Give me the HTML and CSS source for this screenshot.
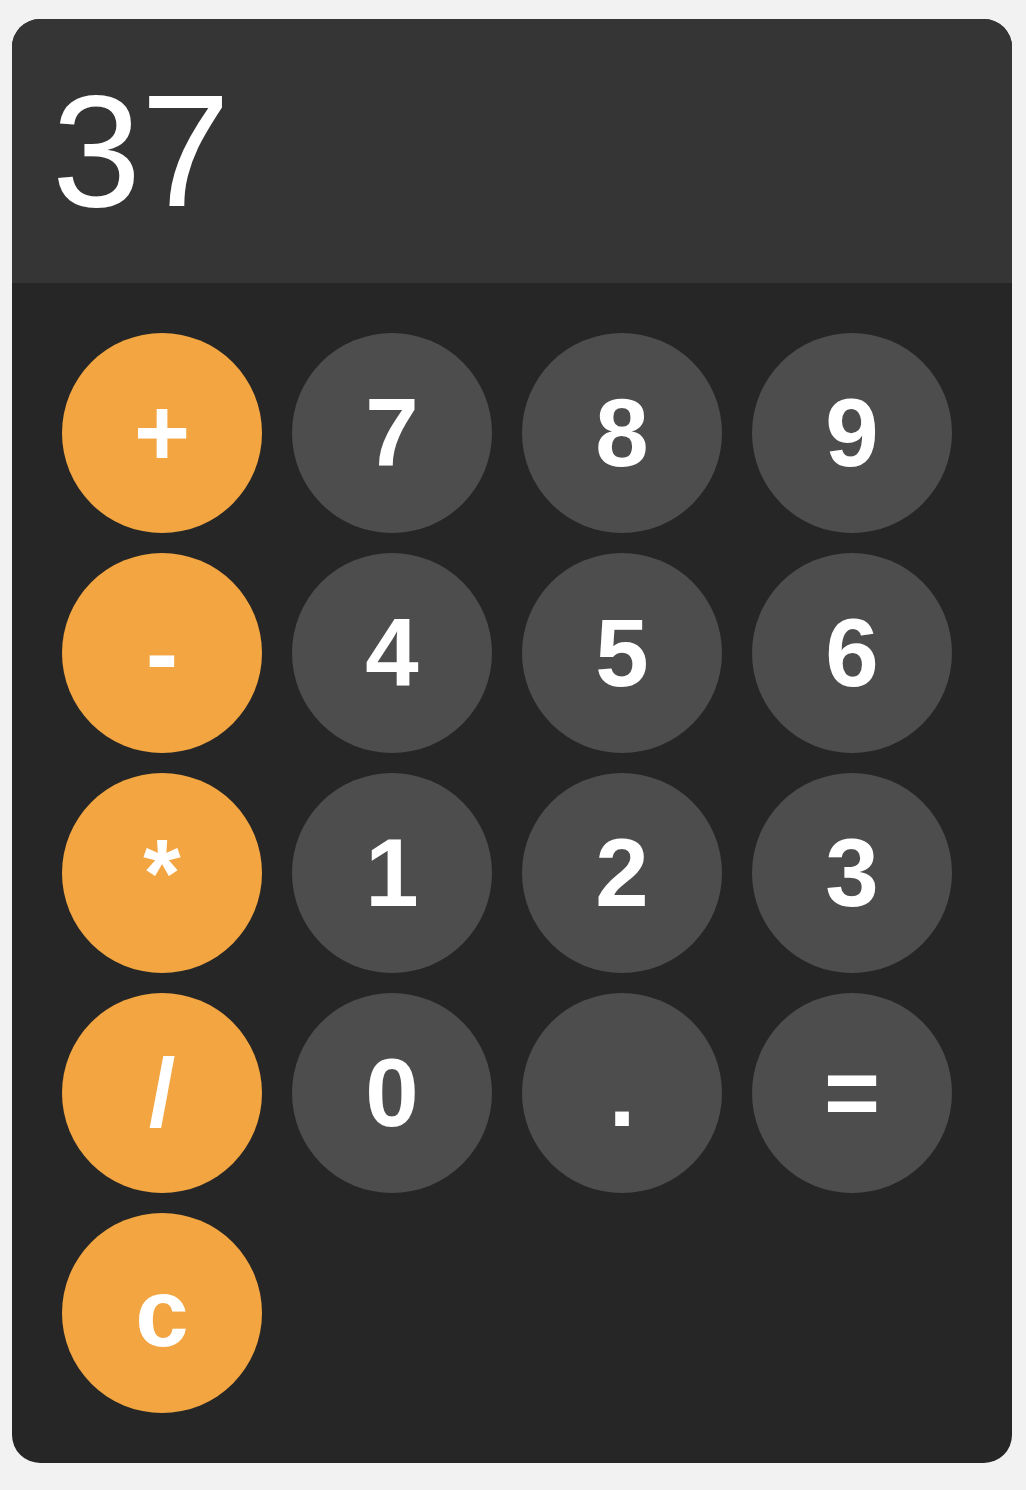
FILE: index.html
```html
<!DOCTYPE html>
<html lang="en">
<head>
    <meta charset="UTF-8">
    <meta name="viewport" content="width=device-width, initial-scale=1.0">
    <title>Calculator</title>
    <link rel="stylesheet" href="styles.css">
</head>
<body>

<div class="calculator">
    <div class="display" id="display">37</div>
    <div class="keys">
        <button class="key operator">+</button>
        <button class="key">7</button>
        <button class="key">8</button>
        <button class="key">9</button>

        <button class="key operator">-</button>
        <button class="key">4</button>
        <button class="key">5</button>
        <button class="key">6</button>

        <button class="key operator">*</button>
        <button class="key">1</button>
        <button class="key">2</button>
        <button class="key">3</button>

        <button class="key operator">/</button>
        <button class="key">0</button>
        <button class="key">.</button>
        <button class="key">=</button>

        <button class="key operator">c</button>
    </div>
</div>

</body>
</html>
```

FILE: styles.css
```css
body {
    font-family: "Liberation Sans", Arial, sans-serif;
    background-color: #f2f2f2;
    margin: 0;
    padding: 19px 14px 27px 12px;
}
.calculator {
    width: 1000px;
    border-radius: 28px;
    overflow: hidden;
    background-color: #262626;
}
.display {
    background-color: #353535;
    color: white;
    font-size: 160px;
    padding: 40px;
    height: 184px;
    line-height: 184px;
}
.keys {
    display: grid;
    grid-template-columns: repeat(4, 200px);
    column-gap: 30px;
    row-gap: 20px;
    padding: 50px;
}
.key {
    width: 200px;
    height: 200px;
    border: none;
    border-radius: 50%;
    background-color: #4d4d4d;
    color: white;
    font-family: "Liberation Sans", Arial, sans-serif;
    font-size: 96px;
    font-weight: bold;
    display: flex;
    align-items: center;
    justify-content: center;
    padding: 0;
    cursor: pointer;
}
.key.operator {
    background-color: #f2a541;
}
```
